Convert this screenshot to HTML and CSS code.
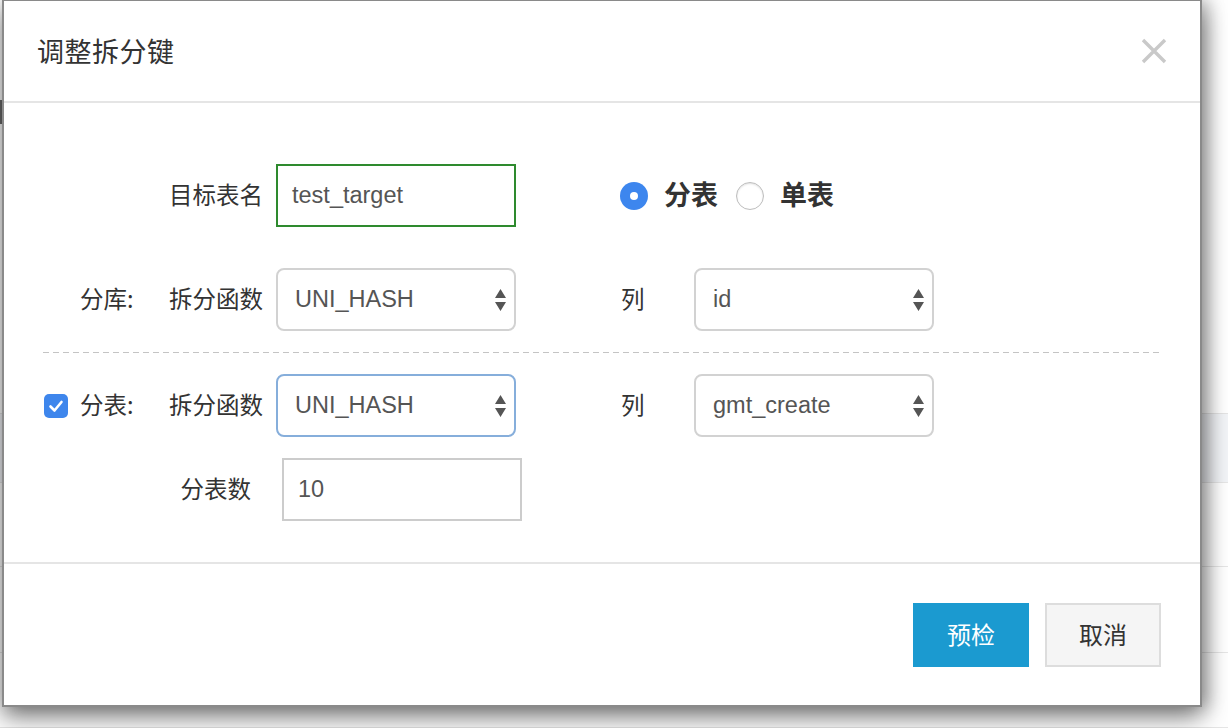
FILE: index.html
```html
<!DOCTYPE html>
<html lang="zh">
<head>
<meta charset="utf-8">
<title>调整拆分键</title>
<link rel="stylesheet" href="styles.css">
</head>
<body>
<div class="page">
  <div class="page-row page-row--head"><span class="page-mark"></span></div>
  <div class="page-row page-row--a"></div>
  <div class="page-row page-row--b"></div>
  <div class="page-row page-row--c"></div>
  <div class="page-row page-row--d"></div>
</div>

<div class="dialog">
  <div class="dialog-header">
    <h1 class="dialog-title">调整拆分键</h1>
    <svg class="close" width="26" height="26" viewBox="0 0 26 26"><path d="M2 2 L24 24 M24 2 L2 24" stroke="#c9c9c9" stroke-width="3.4" fill="none"/></svg>
  </div>

  <div class="dialog-body">
    <div class="row row--first">
      <div class="prefix"></div>
      <div class="label">目标表名</div>
      <div class="input input--ok">test_target</div>
      <div class="radios">
        <span class="radio radio--on"></span><span class="radio-label">分表</span>
        <span class="radio"></span><span class="radio-label">单表</span>
      </div>
    </div>

    <div class="row">
      <div class="prefix"><span class="check-slot"></span><span class="prefix-text">分库:</span></div>
      <div class="label">拆分函数</div>
      <div class="select"><span class="select-text">UNI_HASH</span><svg class="arrows" width="11" height="22" viewBox="0 0 11 22"><path d="M5.5 0 L11 9 L0 9 Z M0 13 L11 13 L5.5 22 Z" fill="#555"/></svg></div>
      <div class="col-label">列</div>
      <div class="select"><span class="select-text">id</span><svg class="arrows" width="11" height="22" viewBox="0 0 11 22"><path d="M5.5 0 L11 9 L0 9 Z M0 13 L11 13 L5.5 22 Z" fill="#555"/></svg></div>
    </div>

    <div class="divider"></div>

    <div class="row">
      <div class="prefix"><span class="check-slot"><span class="checkbox"><svg width="24" height="24" viewBox="0 0 24 24"><path d="M6.5 12.5 L10.5 16.5 L17.5 8" stroke="#fff" stroke-width="2.6" fill="none" stroke-linecap="round" stroke-linejoin="round"/></svg></span></span><span class="prefix-text">分表:</span></div>
      <div class="label">拆分函数</div>
      <div class="select select--focus"><span class="select-text">UNI_HASH</span><svg class="arrows" width="11" height="22" viewBox="0 0 11 22"><path d="M5.5 0 L11 9 L0 9 Z M0 13 L11 13 L5.5 22 Z" fill="#555"/></svg></div>
      <div class="col-label">列</div>
      <div class="select"><span class="select-text">gmt_create</span><svg class="arrows" width="11" height="22" viewBox="0 0 11 22"><path d="M5.5 0 L11 9 L0 9 Z M0 13 L11 13 L5.5 22 Z" fill="#555"/></svg></div>
    </div>

    <div class="row row--last">
      <div class="prefix"></div>
      <div class="label label--short">分表数</div>
      <div class="input input--plain">10</div>
    </div>
  </div>

  <div class="dialog-footer">
    <button class="btn btn--primary">预检</button>
    <button class="btn btn--default">取消</button>
  </div>
</div>
</body>
</html>
```

FILE: styles.css
```css
html, body {
  margin: 0;
  padding: 0;
}
body {
  width: 1228px;
  height: 728px;
  overflow: hidden;
  background: #ffffff;
  font-family: "Liberation Sans", "Noto Sans CJK SC", sans-serif;
  color: #333;
  position: relative;
}

/* background page */
.page {
  display: flex;
  flex-direction: column;
}
.page-row {
  border-bottom: 1px solid #e6e6e6;
  box-sizing: border-box;
}
.page-row--head {
  height: 414px;
  border-bottom: 1px solid #e4e4e4;
  position: relative;
}
.page-mark {
  position: absolute;
  left: 0;
  top: 100px;
  width: 3px;
  height: 24px;
  background: #6a6a6a;
}
.page-row--a {
  height: 69px;
  background: #f2f4f7;
}
.page-row--b {
  height: 84px;
}
.page-row--c {
  height: 86px;
}
.page-row--d {
  height: 75px;
}

/* dialog */
.dialog {
  position: absolute;
  left: 2px;
  top: -1px;
  width: 1200px;
  height: 708px;
  box-sizing: border-box;
  border: 2px solid #8a8a8a;
  background: #fff;
  box-shadow: 0 10px 24px rgba(0, 0, 0, 0.5), 6px 0 16px rgba(0, 0, 0, 0.22);
  display: flex;
  flex-direction: column;
}

.dialog-header {
  height: 102px;
  box-sizing: border-box;
  border-bottom: 2px solid #e5e5e5;
  padding: 0 33px 0 33px;
  display: flex;
  align-items: center;
  justify-content: space-between;
  flex-shrink: 0;
}
.dialog-title {
  margin: 0 0 2px 0;
  font-family: "Noto Sans CJK SC", sans-serif;
  font-weight: 400;
  font-size: 27px;
  color: #333;
  letter-spacing: 0.5px;
}
.close {
  display: block;
}

.dialog-body {
  height: 461px;
  box-sizing: border-box;
  border-bottom: 2px solid #e5e5e5;
  padding: 61px 39px 0 39px;
  flex-shrink: 0;
}

.row {
  display: flex;
  align-items: center;
  height: 63px;
}
.row--first {
  margin-bottom: 41px;
}
.row--last {
  margin-top: 21px;
}
.divider {
  height: 1px;
  background: repeating-linear-gradient(to right, #c4c4c4 0 6px, transparent 6px 10px);
  margin: 21px 0 21px 0;
}

.prefix {
  width: 124px;
  display: flex;
  align-items: center;
  flex-shrink: 0;
}
.check-slot {
  width: 37px;
  display: flex;
  align-items: center;
}
.checkbox {
  width: 24px;
  height: 24px;
  margin-left: 1px;
  border-radius: 5px;
  background: #3e86ec;
  display: flex;
}
.prefix-text,
.label,
.col-label {
  font-family: "Noto Sans CJK SC", sans-serif;
  font-size: 23.5px;
  color: #333;
  padding-bottom: 4px;
}
.label {
  width: 96px;
  text-align: right;
  margin-right: 13px;
  flex-shrink: 0;
}
.label--short {
  width: 84px;
  margin-right: 31px;
}

.input,
.select {
  width: 240px;
  height: 63px;
  box-sizing: border-box;
  font-size: 23.5px;
  color: #555;
  display: flex;
  align-items: center;
  flex-shrink: 0;
}
.input--ok {
  border: 2px solid #2e8a2e;
  padding-left: 14px;
}
.input--plain {
  border: 2px solid #cccccc;
  padding-left: 14px;
}

.select {
  border: 2px solid #d2d2d2;
  border-radius: 8px;
  padding: 0 8px 0 17px;
  justify-content: space-between;
}
.select--focus {
  border-color: #86aedb;
}
.arrows {
  display: block;
}

.col-label {
  margin-left: 105px;
  width: 73px;
  flex-shrink: 0;
}

.radios {
  margin-left: 104px;
  display: flex;
  align-items: center;
}
.radio {
  width: 28px;
  height: 28px;
  border-radius: 50%;
  box-sizing: border-box;
  border: 1px solid #bdbdbd;
  background: #fff;
  box-shadow: inset 0 1px 2px rgba(0, 0, 0, 0.12);
  flex-shrink: 0;
  position: relative;
}
.radio--on {
  border: none;
  background: #3d86ee;
  box-shadow: none;
}
.radio--on::after {
  content: "";
  position: absolute;
  left: 10px;
  top: 10px;
  width: 8px;
  height: 8px;
  border-radius: 50%;
  background: #fff;
}
.radio-label {
  font-family: "Noto Sans CJK SC", sans-serif;
  font-weight: 700;
  font-size: 27px;
  color: #333;
  margin: 0 18px 4px 16px;
}

.dialog-footer {
  flex: 1;
  display: flex;
  justify-content: flex-end;
  align-items: flex-start;
  padding: 39px 39px 0 0;
  gap: 16px;
}
.btn {
  width: 116px;
  height: 64px;
  box-sizing: border-box;
  font-family: "Noto Sans CJK SC", sans-serif;
  font-size: 24px;
  cursor: pointer;
  padding: 0 0 3px 0;
}
.btn--primary {
  background: #1b9ad0;
  border: none;
  color: #fff;
}
.btn--default {
  background: #f5f5f5;
  border: 2px solid #dddddd;
  color: #333;
}
```
